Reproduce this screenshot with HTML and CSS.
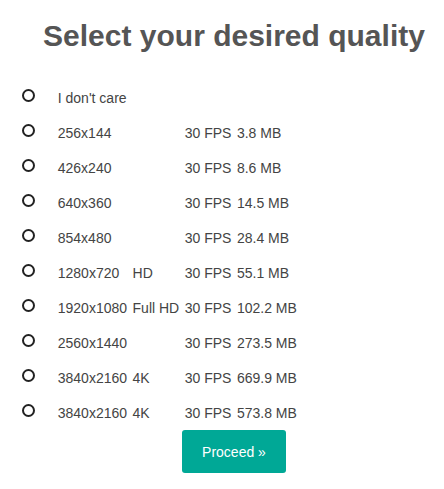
FILE: index.html
```html
<!DOCTYPE html>
<html lang="en">
<head>
    <meta charset="UTF-8">
    <meta name="viewport" content="width=device-width, initial-scale=1.0">
    <title>Select quality</title>
    <link rel="stylesheet" href="styles.css">
</head>
<body>
    <div class="page">
        <h1>Select your desired quality</h1>
        <table class="quality-table">
            <tr><td class="pick"><span class="radio"></span></td><td colspan="4">I don't care</td></tr>
            <tr><td class="pick"><span class="radio"></span></td><td>256x144</td><td></td><td>30 FPS</td><td>3.8 MB</td></tr>
            <tr><td class="pick"><span class="radio"></span></td><td>426x240</td><td></td><td>30 FPS</td><td>8.6 MB</td></tr>
            <tr><td class="pick"><span class="radio"></span></td><td>640x360</td><td></td><td>30 FPS</td><td>14.5 MB</td></tr>
            <tr><td class="pick"><span class="radio"></span></td><td>854x480</td><td></td><td>30 FPS</td><td>28.4 MB</td></tr>
            <tr><td class="pick"><span class="radio"></span></td><td>1280x720</td><td>HD</td><td>30 FPS</td><td>55.1 MB</td></tr>
            <tr><td class="pick"><span class="radio"></span></td><td>1920x1080</td><td>Full HD</td><td>30 FPS</td><td>102.2 MB</td></tr>
            <tr><td class="pick"><span class="radio"></span></td><td>2560x1440</td><td></td><td>30 FPS</td><td>273.5 MB</td></tr>
            <tr><td class="pick"><span class="radio"></span></td><td>3840x2160</td><td>4K</td><td>30 FPS</td><td>669.9 MB</td></tr>
            <tr><td class="pick"><span class="radio"></span></td><td>3840x2160</td><td>4K</td><td>30 FPS</td><td>573.8 MB</td></tr>
        </table>
        <div class="actions">
            <button class="proceed">Proceed &raquo;</button>
        </div>
    </div>
</body>
</html>
```

FILE: styles.css
```css
body {
    margin: 0;
    font-family: 'Liberation Sans', Arial, sans-serif;
    background-color: #fff;
    color: #444;
}

.page {
    padding-left: 24px;
}

h1 {
    margin: 18px 0 26px;
    font-size: 30px;
    line-height: 36px;
    font-weight: bold;
    color: #555;
    text-align: center;
    white-space: nowrap;
}

.quality-table {
    border-collapse: collapse;
    margin-left: -4px;
    font-size: 14px;
}

.quality-table td {
    height: 35px;
    padding: 0 2.75px;
    white-space: nowrap;
    vertical-align: middle;
}

.quality-table td.pick {
    width: 14px;
    padding: 0 19px 0 2px;
}

.radio {
    display: block;
    width: 9px;
    height: 9px;
    border: 2.5px solid #222;
    border-radius: 50%;
    margin-top: -4px;
}

.actions {
    text-align: center;
}

.proceed {
    width: 104px;
    height: 43px;
    border: none;
    border-radius: 3px;
    background-color: #00a896;
    color: #fff;
    font-family: 'Liberation Sans', Arial, sans-serif;
    font-size: 14px;
    cursor: pointer;
}
```
